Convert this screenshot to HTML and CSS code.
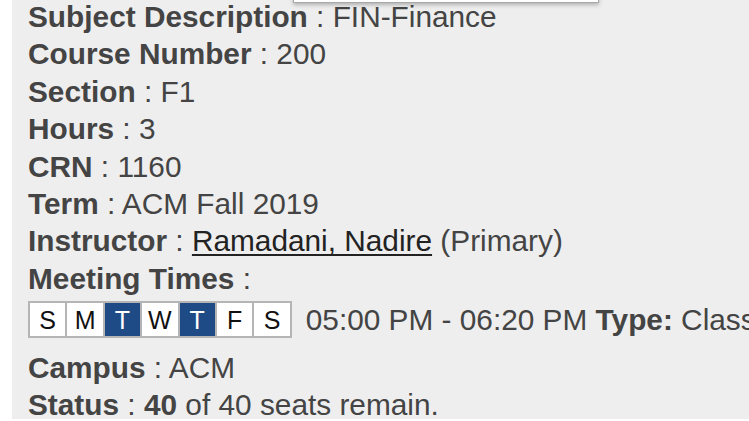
FILE: index.html
```html
<!DOCTYPE html>
<html>
<head>
<meta charset="utf-8">
<link rel="stylesheet" href="styles.css">
</head>
<body>
<div class="page">
  <div class="panel">
    <div class="menu"></div>
    <div class="details">
      <div class="row"><b>Subject Description</b> : FIN-Finance</div>
      <div class="row"><b>Course Number</b> : 200</div>
      <div class="row"><b>Section</b> : F1</div>
      <div class="row"><b>Hours</b> : 3</div>
      <div class="row"><b>CRN</b> : 1160</div>
      <div class="row"><b>Term</b> : ACM Fall 2019</div>
      <div class="row"><b>Instructor</b> : <a class="link" href="#">Ramadani, Nadire</a> (Primary)</div>
      <div class="row"><b>Meeting Times</b> :</div>
      <div class="meeting">
        <div class="days">
          <span class="day">S</span>
          <span class="day">M</span>
          <span class="day on">T</span>
          <span class="day">W</span>
          <span class="day on">T</span>
          <span class="day">F</span>
          <span class="day">S</span>
        </div>
        <span class="time">05:00 PM - 06:20 PM <b>Type:</b> Class</span>
      </div>
      <div class="row"><b>Campus</b> : ACM</div>
      <div class="row"><b>Status</b> : <b>40</b> of 40 seats remain.</div>
    </div>
  </div>
</div>
</body>
</html>
```
FILE: styles.css
```css
html, body {
  margin: 0;
  padding: 0;
  background: #ffffff;
  overflow: hidden;
}
.page {
  padding-left: 12px;
  height: 421px;
}
.panel {
  position: relative;
  background: #eeeeee;
  height: 419px;
  overflow: hidden;
  font-family: "Liberation Sans", Arial, sans-serif;
  font-size: 29.8px;
  line-height: 37.4px;
  color: #444444;
}
.menu {
  position: absolute;
  left: 281px;
  top: -20px;
  width: 304px;
  height: 21px;
  background: #ffffff;
  border: 1.5px solid #a8a8a8;
  box-shadow: 0 2px 4px rgba(0,0,0,0.25);
}
.details {
  margin-top: -2px;
  padding-left: 16px;
}
.row {
  white-space: nowrap;
}
.row b, .time b {
  font-weight: bold;
}
.link {
  color: #222222;
  text-decoration: underline;
  text-decoration-thickness: 2px;
  text-underline-offset: 3px;
}
.meeting {
  display: flex;
  align-items: center;
  white-space: nowrap;
  margin-top: 4px;
  margin-bottom: 10px;
}
.days {
  display: flex;
  gap: 2px;
  padding: 2px;
  background: #b5b5b5;
  flex: none;
}
.day {
  width: 35.4px;
  height: 33px;
  line-height: 34px;
  background: #ffffff;
  color: #111111;
  text-align: center;
  font-size: 25px;
}
.day.on {
  background: #1e4b86;
  color: #ffffff;
}
.time {
  margin-left: 14px;
}
```
